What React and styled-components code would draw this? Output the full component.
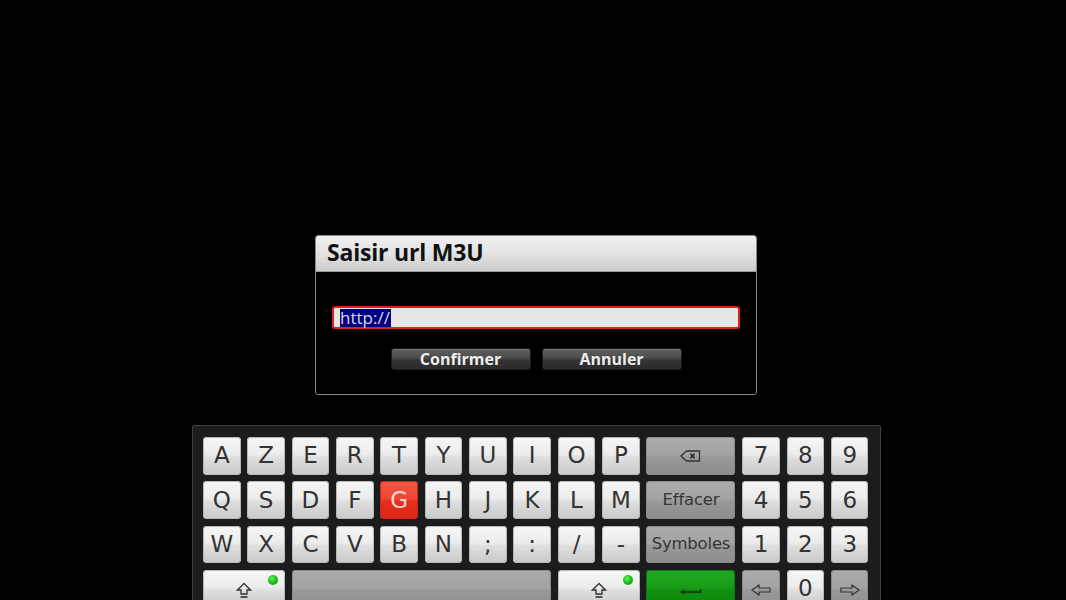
import React from "react";
import styled, { createGlobalStyle } from "styled-components";

const Global = createGlobalStyle`
  html, body { margin: 0; padding: 0; background: #000; }
  body { width: 1066px; height: 600px; overflow: hidden; }
  #root { width: 1066px; height: 600px; }
`;

const Screen = styled.div`
  width: 1066px;
  height: 600px;
  box-sizing: border-box;
  background: #000;
  display: flex;
  flex-direction: column;
  align-items: center;
  padding-top: 235px;
  padding-left: 6px;
  overflow: hidden;
`;

const Dialog = styled.div`
  flex-shrink: 0;
  width: 442px;
  box-sizing: border-box;
  border: 1px solid #8a8a8a;
  border-radius: 3px;
  background: #000;
  overflow: hidden;
`;

const TitleBar = styled.div`
  height: 36px;
  box-sizing: border-box;
  background: linear-gradient(#f0f0f0 0%, #e2e2e2 50%, #cdcdcd 100%);
  border-bottom: 1px solid #9a9a9a;
  display: flex;
  align-items: center;
  padding: 0 0 3px 11px;
  font-family: "Open Sans", "DejaVu Sans", sans-serif;
  font-weight: 700;
  font-size: 23px;
  color: #111;
  letter-spacing: -0.2px;
`;

const Body = styled.div`
  padding: 34px 16px 24px 16px;
  display: flex;
  flex-direction: column;
  align-items: stretch;
`;

const Input = styled.div`
  height: 23px;
  box-sizing: border-box;
  border: 2px solid #e0201a;
  border-radius: 3px;
  background: #e6e6e6;
  display: flex;
  align-items: center;
  padding-left: 5px;
`;

const Caret = styled.span`
  width: 1px;
  height: 17px;
  background: #f4f0b8;
`;

const Selected = styled.span`
  background: #000080;
  color: #d4d8ec;
  font-family: "Open Sans", "DejaVu Sans", sans-serif;
  font-size: 17px;
  line-height: 18px;
  height: 18px;
  padding: 0 1px 0 0;
  display: flex;
  align-items: center;
`;

const ButtonRow = styled.div`
  display: flex;
  justify-content: center;
  gap: 11px;
  margin-top: 19px;
`;

const Button = styled.div`
  width: 140px;
  height: 22px;
  box-sizing: border-box;
  border: 1px solid #1c1c1c;
  border-radius: 3px;
  background: linear-gradient(#626262 0%, #4a4a4a 45%, #353535 55%, #2a2a2a 100%);
  box-shadow: inset 0 1px 0 rgba(255, 255, 255, 0.12);
  display: flex;
  align-items: center;
  justify-content: center;
  font-family: "Open Sans", "DejaVu Sans", sans-serif;
  font-weight: 700;
  font-size: 16px;
  color: #ececec;
`;

const Keyboard = styled.div`
  margin-top: 30px;
  width: 689px;
  height: 260px;
  flex-shrink: 0;
  box-sizing: border-box;
  border: 1px solid #3e4143;
  border-radius: 2px;
  background: #1a1c1e;
  padding: 11px 0 0 10.5px;
`;

const KeyGrid = styled.div`
  display: grid;
  grid-template-columns: repeat(10, 37.5px) 89px repeat(3, 37.5px);
  grid-auto-rows: 37.5px;
  column-gap: 6.85px;
  row-gap: 6.9px;
`;

const variants = {
  white: {
    bg: "linear-gradient(#f6f6f6 0%, #ececec 45%, #dedede 55%, #c9c9c9 100%)",
    color: "#333",
    border: "#b8b8b8",
  },
  gray: {
    bg: "linear-gradient(#acacac 0%, #a3a3a3 47%, #989898 53%, #8e8e8e 100%)",
    color: "#363636",
    border: "#8a8a8a",
  },
  red: {
    bg: "linear-gradient(#f45a48 0%, #ee4433 47%, #e5301f 53%, #dc2615 100%)",
    color: "#f6d6cf",
    border: "#c82818",
  },
  green: {
    bg: "linear-gradient(#1fa81f 0%, #179c17 47%, #10900f 53%, #0c860c 100%)",
    color: "#1b3a1b",
    border: "#0d7a0d",
  },
};

const Key = styled.div`
  position: relative;
  grid-column: span ${(p) => p.$span || 1};
  border-radius: 4px;
  background: ${(p) => variants[p.$variant || "white"].bg};
  box-shadow: inset 0 0 0 1px ${(p) => variants[p.$variant || "white"].border};
  color: ${(p) => variants[p.$variant || "white"].color};
  display: flex;
  align-items: center;
  justify-content: center;
  font-family: "DejaVu Sans", "Liberation Sans", sans-serif;
  font-size: ${(p) => (p.$small ? "16.5px" : "23px")};
  letter-spacing: ${(p) => (p.$small ? "-0.2px" : "0")};
  line-height: 1;
  white-space: nowrap;
`;

const Led = styled.span`
  position: absolute;
  top: 5px;
  right: 7px;
  width: 10px;
  height: 10px;
  border-radius: 50%;
  background: radial-gradient(circle at 40% 35%, #6ef06e 0%, #1fc21f 45%, #0a8a0a 100%);
`;

const ShiftIcon = () => (
  <svg width="16" height="17" viewBox="0 0 16 17" style={{ marginTop: 3 }}>
    <path d="M8 1.5 L14.5 8 H11 V12 H5 V8 H1.5 Z" fill="none" stroke="#333" strokeWidth="1.3" strokeLinejoin="miter" />
    <line x1="4.5" y1="15" x2="11.5" y2="15" stroke="#333" strokeWidth="1.6" />
  </svg>
);

const BackspaceIcon = () => (
  <svg width="21" height="12" viewBox="0 0 21 12">
    <path d="M1 6 L6.5 1 H19.5 V11 H6.5 Z" fill="none" stroke="#333" strokeWidth="1.3" />
    <path d="M10.5 3.8 L14.5 8.2 M14.5 3.8 L10.5 8.2" stroke="#222" strokeWidth="1.5" />
  </svg>
);

const EnterIcon = () => (
  <svg width="24" height="9" viewBox="0 0 24 9" style={{ marginTop: 4 }}>
    <path d="M2.5 6 H21.5 V3" fill="none" stroke="#1a3a1a" strokeWidth="1.8" />
    <path d="M1 6 L5.5 3.2 V8.8 Z" fill="#1a3a1a" />
  </svg>
);

const ArrowIcon = ({ dir }) => (
  <svg
    width="20"
    height="12"
    viewBox="0 0 20 12"
    style={{ marginTop: 2, transform: dir === "right" ? "scaleX(-1)" : "none" }}
  >
    <path d="M1 6 L8 1 V4 H19 V8 H8 V11 Z" fill="none" stroke="#333" strokeWidth="1.2" strokeLinejoin="miter" />
  </svg>
);

const rows = [
  ["A", "Z", "E", "R", "T", "Y", "U", "I", "O", "P"],
  ["Q", "S", "D", "F", "G", "H", "J", "K", "L", "M"],
  ["W", "X", "C", "V", "B", "N", ";", ":", "/", "-"],
];
const numRows = [
  ["7", "8", "9"],
  ["4", "5", "6"],
  ["1", "2", "3"],
];

export default function App() {
  return (
    <>
      <Global />
      <Screen>
        <Dialog>
          <TitleBar>Saisir url M3U</TitleBar>
          <Body>
            <Input>
              <Caret />
              <Selected>http://</Selected>
            </Input>
            <ButtonRow>
              <Button>Confirmer</Button>
              <Button>Annuler</Button>
            </ButtonRow>
          </Body>
        </Dialog>
        <Keyboard>
          <KeyGrid>
            {rows.map((row, i) => (
              <React.Fragment key={i}>
                {row.map((k) => (
                  <Key key={k} $variant={k === "G" ? "red" : "white"}>
                    {k}
                  </Key>
                ))}
                {i === 0 && (
                  <Key $variant="gray">
                    <BackspaceIcon />
                  </Key>
                )}
                {i === 1 && (
                  <Key $variant="gray" $small>
                    Effacer
                  </Key>
                )}
                {i === 2 && (
                  <Key $variant="gray" $small>
                    Symboles
                  </Key>
                )}
                {numRows[i].map((n) => (
                  <Key key={n}>{n}</Key>
                ))}
              </React.Fragment>
            ))}
            <Key $span={2}>
              <ShiftIcon />
              <Led />
            </Key>
            <Key $span={6} $variant="gray" />
            <Key $span={2}>
              <ShiftIcon />
              <Led />
            </Key>
            <Key $variant="green">
              <EnterIcon />
            </Key>
            <Key $variant="gray">
              <ArrowIcon dir="left" />
            </Key>
            <Key>0</Key>
            <Key $variant="gray">
              <ArrowIcon dir="right" />
            </Key>
          </KeyGrid>
        </Keyboard>
      </Screen>
    </>
  );
}
